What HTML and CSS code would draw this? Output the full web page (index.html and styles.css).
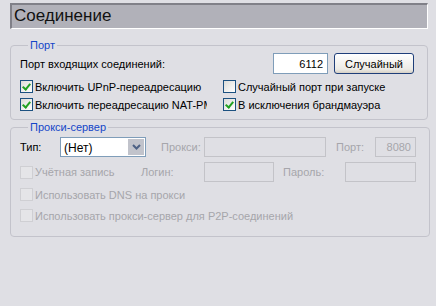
FILE: index.html
```html
<!DOCTYPE html>
<html lang="ru">

<head>
    <meta charset="UTF-8">
    <title>Соединение</title>
    <link rel="stylesheet" href="styles.css">
</head>

<body>
    <div id="page">
        <div class="title-bar">Соединение</div>

        <fieldset class="group">
            <legend>Порт</legend>
            <div class="row port-row">
                <span class="grow">Порт входящих соединений:</span>
                <input type="text" class="field port-field" value="6112">
                <button class="btn">Случайный</button>
            </div>
            <div class="check-grid">
                <label class="check"><span class="box on"></span><span class="txt">Включить UPnP-переадресацию</span></label>
                <label class="check"><span class="box"></span><span class="txt">Случайный порт при запуске</span></label>
                <label class="check"><span class="box on"></span><span class="txt">Включить переадресацию NAT-PMP</span></label>
                <label class="check"><span class="box on"></span><span class="txt">В исключения брандмауэра</span></label>
            </div>
        </fieldset>

        <fieldset class="group proxy">
            <legend>Прокси-сервер</legend>
            <div class="row">
                <span class="lbl w-type">Тип:</span>
                <div class="select">
                    <span class="select-val">(Нет)</span>
                    <span class="select-btn">
                        <svg width="9" height="6" viewBox="0 0 9 6"><path d="M1 1l3.5 3.5L8 1" fill="none" stroke="#4d6185" stroke-width="2"/></svg>
                    </span>
                </div>
                <span class="lbl off w-proxy">Прокси:</span>
                <span class="field off w-host"></span>
                <span class="lbl off w-port">Порт:</span>
                <span class="field off w-num">8080</span>
            </div>
            <div class="row">
                <label class="check off w-acc"><span class="box"></span><span class="txt">Учётная запись</span></label>
                <span class="lbl off w-login">Логин:</span>
                <span class="field off w-user"></span>
                <span class="lbl off w-pass">Пароль:</span>
                <span class="field off w-pwd"></span>
            </div>
            <label class="check off line"><span class="box"></span><span class="txt">Использовать DNS на прокси</span></label>
            <label class="check off line"><span class="box"></span><span class="txt">Использовать прокси-сервер для P2P-соединений</span></label>
        </fieldset>
    </div>
</body>

</html>
```

FILE: styles.css
```css
* {
    margin: 0;
    padding: 0;
    box-sizing: border-box;
}

body {
    background: #dfdfe4;
    font-family: "Liberation Sans", Arial, sans-serif;
    font-size: 11px;
    color: #000;
}

#page {
    padding: 3px 8px 0 10px;
}

.title-bar {
    height: 26px;
    background: #b1b1b9;
    border-top: 2px solid #808088;
    border-left: 2px solid #808088;
    border-bottom: 1px solid #fff;
    border-right: 1px solid #fff;
    font-size: 17px;
    line-height: 22px;
    padding-left: 2px;
    color: #111;
}

.group {
    margin-top: 10px;
    border: 1px solid #c3c3cb;
    border-radius: 4px;
    padding: 1px 13px 8px 9px;
}

.group legend {
    color: #1546c8;
    padding: 0 2px;
    margin-left: 8px;
    line-height: 13px;
}

.row {
    display: flex;
    align-items: center;
}

.port-row {
    height: 21px;
}

.grow {
    flex: 1;
}

.field {
    display: block;
    height: 21px;
    border: 1px solid #7f9db9;
    background: #fff;
    font: inherit;
    outline: none;
}

.port-field {
    width: 55px;
    text-align: right;
    padding-right: 4px;
}

.btn {
    width: 80px;
    height: 21px;
    margin-left: 6px;
    font: inherit;
    border: 1px solid #1f3f7a;
    border-radius: 3px;
    background: linear-gradient(#fff, #ecebe6 80%, #d6d0c5);
}

.check-grid {
    display: grid;
    grid-template-columns: 187px 1fr;
    column-gap: 16px;
    row-gap: 5px;
    margin-top: 6px;
}

.check {
    display: flex;
    align-items: center;
    height: 13px;
    overflow: hidden;
    white-space: nowrap;
}

.box {
    flex: none;
    width: 13px;
    height: 13px;
    border: 1px solid #1c5180;
    background: linear-gradient(135deg, #dcdcd7, #fff);
    margin-right: 2px;
    position: relative;
}

.box.on::after {
    content: "";
    position: absolute;
    left: 3px;
    top: 1px;
    width: 3px;
    height: 6px;
    border: solid #21a121;
    border-width: 0 2px 2px 0;
    transform: rotate(40deg);
}

.proxy {
    margin-top: 1px;
    padding-top: 3px;
    padding-bottom: 14px;
}

.proxy .row {
    height: 20px;
    margin-bottom: 5px;
}

.select {
    display: flex;
    width: 86px;
    height: 20px;
    border: 1px solid #7f9db9;
    background: #fff;
}

.select-val {
    flex: 1;
    padding: 3px 0 0 3px;
    font-size: 12px;
}

.select-btn {
    width: 16px;
    margin: 1px;
    background: #c1c3cb;
    display: flex;
    align-items: center;
    justify-content: center;
}

.off {
    color: #a6a6ab;
}

.field.off {
    background: transparent;
    border-color: #c3c3c8;
    height: 20px;
    text-align: right;
    padding: 3px 4px 0 0;
}

.check.off .box {
    border-color: #cfcfd3;
    background: #e5e5e8;
}

.w-type { width: 40px; }
.w-proxy { width: 43px; margin-left: 15px; }
.w-host { width: 122px; }
.w-port { width: 39px; margin-left: 10px; }
.w-num { width: 41px; }
.w-acc { width: 121px; }
.w-login { width: 63px; }
.w-user { width: 70px; }
.w-pass { width: 62px; margin-left: 9px; }
.w-pwd { width: 71px; }

.line {
    margin-top: 6px;
}

.line + .line {
    margin-top: 8px;
}
```
